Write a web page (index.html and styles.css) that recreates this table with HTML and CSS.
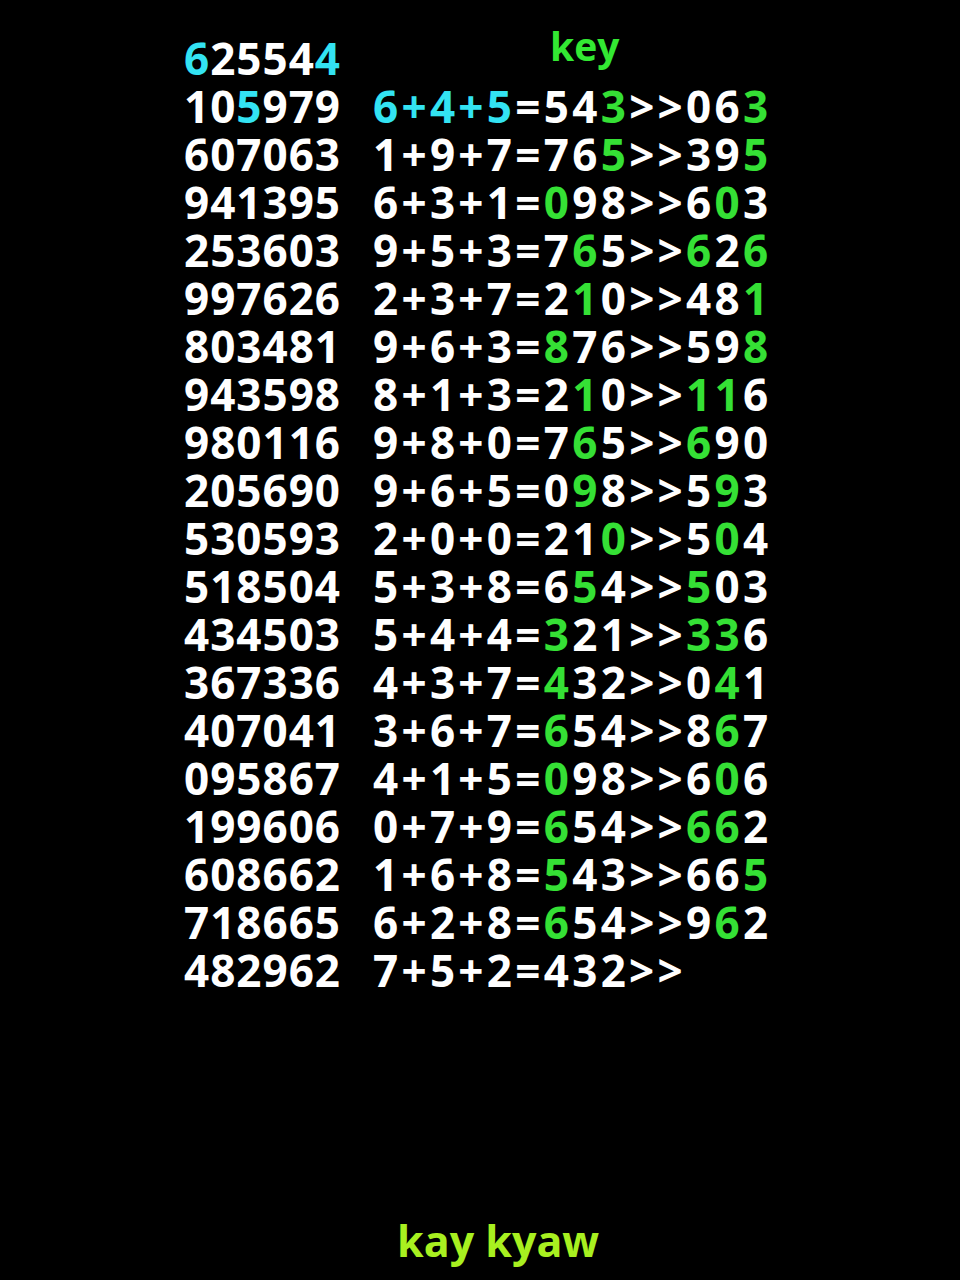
FILE: index.html
```html
<!DOCTYPE html>
<html lang="en">
<head>
    <meta charset="UTF-8">
    <title>key</title>
    <link rel="stylesheet" href="styles.css">
</head>
<body>
    <div class="sheet">
        <div class="head">
            <span class="num"><b class="cy">6</b>2554<b class="cy">4</b></span>
            <span class="key">key</span>
        </div>

        <div class="rows">
            <span class="num">10<b class="cy">5</b>979</span>
            <span class="calc"><b class="cy">6+4+5</b>=54<b class="gr">3</b>&gt;&gt;06<b class="gr">3</b></span>

            <span class="num">607063</span>
            <span class="calc">1+9+7=76<b class="gr">5</b>&gt;&gt;39<b class="gr">5</b></span>

            <span class="num">941395</span>
            <span class="calc">6+3+1=<b class="gr">0</b>98&gt;&gt;6<b class="gr">0</b>3</span>

            <span class="num">253603</span>
            <span class="calc">9+5+3=7<b class="gr">6</b>5&gt;&gt;<b class="gr">6</b>2<b class="gr">6</b></span>

            <span class="num">997626</span>
            <span class="calc">2+3+7=2<b class="gr">1</b>0&gt;&gt;48<b class="gr">1</b></span>

            <span class="num">803481</span>
            <span class="calc">9+6+3=<b class="gr">8</b>76&gt;&gt;59<b class="gr">8</b></span>

            <span class="num">943598</span>
            <span class="calc">8+1+3=2<b class="gr">1</b>0&gt;&gt;<b class="gr">11</b>6</span>

            <span class="num">980116</span>
            <span class="calc">9+8+0=7<b class="gr">6</b>5&gt;&gt;<b class="gr">6</b>90</span>

            <span class="num">205690</span>
            <span class="calc">9+6+5=0<b class="gr">9</b>8&gt;&gt;5<b class="gr">9</b>3</span>

            <span class="num">530593</span>
            <span class="calc">2+0+0=21<b class="gr">0</b>&gt;&gt;5<b class="gr">0</b>4</span>

            <span class="num">518504</span>
            <span class="calc">5+3+8=6<b class="gr">5</b>4&gt;&gt;<b class="gr">5</b>03</span>

            <span class="num">434503</span>
            <span class="calc">5+4+4=<b class="gr">3</b>21&gt;&gt;<b class="gr">33</b>6</span>

            <span class="num">367336</span>
            <span class="calc">4+3+7=<b class="gr">4</b>32&gt;&gt;0<b class="gr">4</b>1</span>

            <span class="num">407041</span>
            <span class="calc">3+6+7=<b class="gr">6</b>54&gt;&gt;8<b class="gr">6</b>7</span>

            <span class="num">095867</span>
            <span class="calc">4+1+5=<b class="gr">0</b>98&gt;&gt;6<b class="gr">0</b>6</span>

            <span class="num">199606</span>
            <span class="calc">0+7+9=<b class="gr">6</b>54&gt;&gt;<b class="gr">66</b>2</span>

            <span class="num">608662</span>
            <span class="calc">1+6+8=<b class="gr">5</b>43&gt;&gt;66<b class="gr">5</b></span>

            <span class="num">718665</span>
            <span class="calc">6+2+8=<b class="gr">6</b>54&gt;&gt;9<b class="gr">6</b>2</span>

            <span class="num">482962</span>
            <span class="calc">7+5+2=432&gt;&gt;</span>
        </div>

        <div class="sign">kay kyaw</div>
    </div>
</body>
</html>
```

FILE: styles.css
```css
* {
    margin: 0;
    padding: 0;
    box-sizing: border-box;
}

body {
    background-color: #000;
    font-family: 'Open Sans', 'Noto Sans', sans-serif;
    font-weight: 700;
    color: #fff;
}

.sheet {
    width: 960px;
    height: 1280px;
    display: flex;
    flex-direction: column;
    padding: 32px 0 0 184px;
}

.head,
.rows {
    display: grid;
    grid-template-columns: 189px auto;
}

.head {
    height: 50px;
    align-items: end;
}

.num,
.calc {
    font-size: 44px;
    line-height: 48px;
    white-space: nowrap;
}

.num {
    letter-spacing: 1px;
}

.calc {
    letter-spacing: 3.3px;
}

.key {
    color: #33e833;
    font-size: 39px;
    line-height: 48px;
    padding-left: 177px;
    align-self: start;
    margin-top: -10px;
}

.rows b,
.head b {
    font-weight: 700;
}

.cy {
    color: #33e3f2;
}

.gr {
    color: #35e035;
}

.sign {
    margin-top: auto;
    margin-bottom: 14px;
    padding-left: 213px;
    color: #a8f020;
    font-size: 43px;
    line-height: 50px;
}
```
